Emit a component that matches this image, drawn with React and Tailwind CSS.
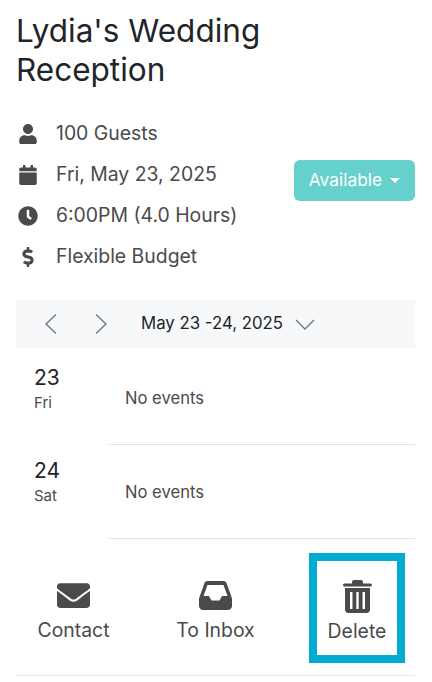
import React from 'react';
import { FaUser, FaCalendar, FaClock, FaDollarSign, FaEnvelope } from 'react-icons/fa';

const details = [
  { icon: FaUser, label: '100 Guests' },
  { icon: FaCalendar, label: 'Fri, May 23, 2025' },
  { icon: FaClock, label: '6:00PM (4.0 Hours)' },
  { icon: FaDollarSign, label: 'Flexible Budget' },
];

function Chevron({ d, className }) {
  return (
    <svg viewBox="0 0 24 24" fill="none" stroke="#6b7280" strokeWidth="1.3" className={className}>
      <path d={d} />
    </svg>
  );
}

function InboxIcon() {
  return (
    <svg viewBox="0 0 33 29" className="w-[33px] h-[29px]">
      <path
        fill="#4a4a4a"
        fillRule="evenodd"
        d="M8.5 0h16c1.5 0 2.6.8 3 2l5 14c.3.8.5 1.500.5 2.500V25c0 2.200-1.800 4-4 4H4c-2.200 0-4-1.800-4-4v-6.500c0-1 .2-1.700.5-2.500l5-14c.4-1.200 1.500-2 3-2zM8.500 4L4.500 15H10l2.500 4.500h8L23 15h5.500l-4-11z"
      />
    </svg>
  );
}

function TrashIcon() {
  return (
    <svg viewBox="0 0 29 33" className="w-[29px] h-[33px]">
      <rect x="9" y="0" width="11" height="5" rx="2" fill="#4a4a4a" />
      <rect x="0" y="3.500" width="29" height="3" rx="1.500" fill="#4a4a4a" />
      <path
        fill="#4a4a4a"
        fillRule="evenodd"
        d="M2 8h25v21.500c0 2-1.500 3.500-3.500 3.500h-18C3.500 33 2 31.500 2 29.500zM7 12v17h2.500V12zM13.300 12v17h2.400V12zM19.500 12v17H22V12z"
      />
    </svg>
  );
}

export default function App() {
  return (
    <div className="w-[432px] h-[682px] bg-white overflow-hidden text-[#4a4a4a] font-['Inter','Liberation_Sans',sans-serif]">
      <div className="pl-4 pr-[17px]">
        <h1 className="pt-[11px] text-[31.5px] leading-[39px] text-[#212529] font-normal">
          Lydia's Wedding<br />Reception
        </h1>

        <div className="mt-[24px] flex items-start justify-between">
          <div className="flex flex-col">
            {details.map((row) => (
              <div key={row.label} className="h-[41px] flex items-center">
                <div className="w-6 flex justify-center text-[20px]">
                  <row.icon />
                </div>
                <span className="ml-[16px] text-[19.4px]">{row.label}</span>
              </div>
            ))}
          </div>
          <button className="mt-[47px] w-[121px] h-[41px] rounded-md bg-[#66d0cc] text-white text-[17.400px] flex items-center justify-center gap-2">
            Available
            <span className="w-0 h-0 border-x-[5px] border-x-transparent border-t-[5px] border-t-white" />
          </button>
        </div>

        <div className="mt-[23px] h-[48px] bg-[#f7f8fa] flex items-center text-[#212529]">
          <Chevron d="M16 2.500L6 12l10 9.500" className="w-6 h-6 ml-[24px]" />
          <Chevron d="M8 2.500L18 12 8 21.500" className="w-6 h-6 ml-[24px]" />
          <span className="ml-[29px] text-[16.800px]">May 23 -24, 2025</span>
          <Chevron d="M2 8l9 9 9-9" className="w-6 h-6 ml-[11px]" />
        </div>

        <div className="flex h-[97px]">
          <div className="w-[93px] pl-[18px] pt-[18px]">
            <div className="text-[21px] leading-[24px] text-[#212529]">23</div>
            <div className="text-[15px] leading-[25px]">Fri</div>
          </div>
          <div className="flex-1 pl-[16px] pt-[39px] border-b border-[#e2e4e8] text-[16.600px] leading-[22px]">
            No events
          </div>
        </div>
        <div className="flex h-[94px]">
          <div className="w-[93px] pl-[18px] pt-[14px]">
            <div className="text-[21px] leading-[24px] text-[#212529]">24</div>
            <div className="text-[15px] leading-[25px]">Sat</div>
          </div>
          <div className="flex-1 pl-[16px] pt-[36px] border-b border-[#e2e4e8] text-[16.600px] leading-[22px]">
            No events
          </div>
        </div>

        <div className="border-b border-[#e8e9ec] h-[137px] flex items-start">
          <div className="w-[115px] pt-[40px] flex flex-col items-center">
            <FaEnvelope className="text-[33px]" />
            <span className="mt-[4px] text-[19.400px] leading-[28px]">Contact</span>
          </div>
          <div className="w-[115px] ml-[27px] pt-[42px] flex flex-col items-center">
            <InboxIcon />
            <span className="mt-[6px] text-[19.400px] leading-[28px]">To Inbox</span>
          </div>
          <div className="w-[96px] h-[110px] ml-[36px] mt-[14px] border-[8px] border-[#00acd0] flex flex-col items-center pt-[19px]">
            <TrashIcon />
            <span className="mt-[4px] text-[19.400px] leading-[28px]">Delete</span>
          </div>
        </div>
      </div>
    </div>
  );
}
